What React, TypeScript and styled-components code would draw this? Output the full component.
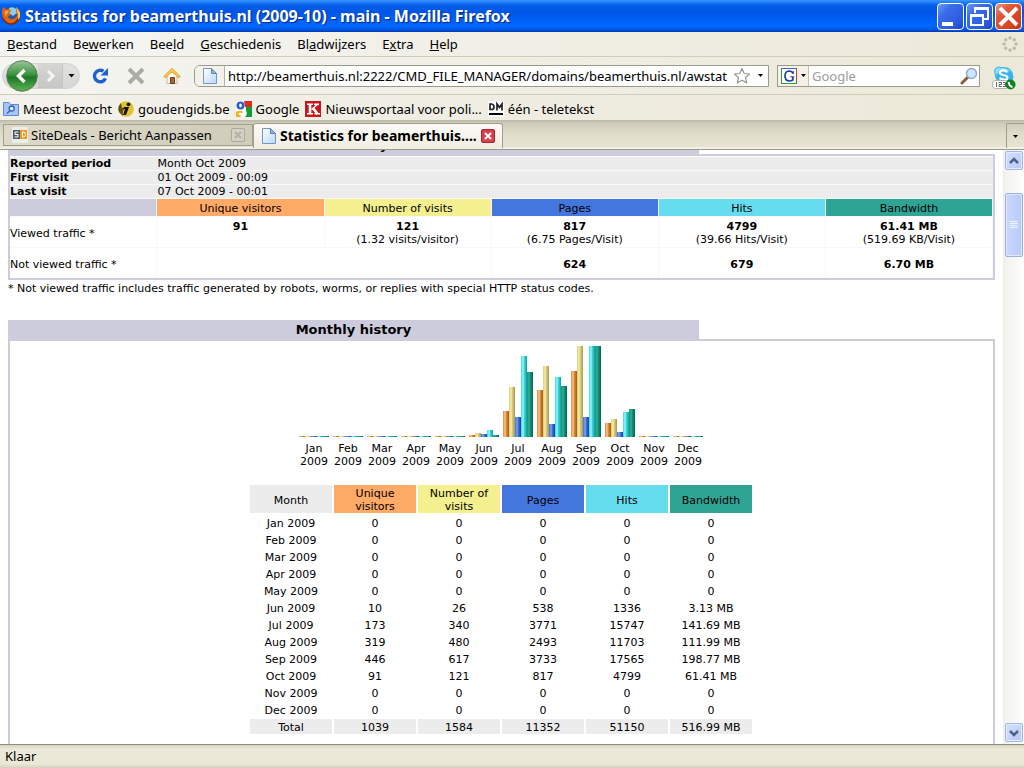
import React from "react";
import styled, { createGlobalStyle, css } from "styled-components";

const ui = `"Noto Sans", "Open Sans", sans-serif`;
const page = `"DejaVu Sans", Verdana, sans-serif`;

const Global = createGlobalStyle`
  *, *::before, *::after { box-sizing: border-box; }
  html, body { margin: 0; padding: 0; }
  body { background: #fff; color: #000; font: 13px/18px ${ui}; }
  button, input { font: inherit; color: inherit; margin: 0; padding: 0; border: 0; background: none; border-radius: 0; }
  a { color: inherit; text-decoration: none; }
  svg { display: block; flex: none; }
`;

const Window = styled.div`
  display: flex;
  flex-direction: column;
  height: 100vh;
  overflow: hidden;
`;

const TitleBar = styled.header`
  display: flex;
  align-items: center;
  gap: 4px;
  flex: none;
  height: 32px;
  padding: 0 2px 0 1px;
  background: linear-gradient(#3a93ff 0, #2483fb 2px, #0560ea 5px, #0055e5 12px, #0060fa 20px, #0068ff 27px, #0051dc 30px, #0039b5 32px);
`;

const WindowTitle = styled.h1`
  flex: 1;
  min-width: 0;
  margin: 0;
  overflow: hidden;
  white-space: nowrap;
  color: #fff;
  font: bold 16px/20px ${ui};
  text-shadow: 1px 1px 1px #04257e;
`;

const WindowButtons = styled.div`
  display: flex;
  gap: 2px;
`;

const WindowButton = styled.button<{ $close?: boolean }>`
  display: grid;
  place-items: center;
  width: 27px;
  height: 27px;
  border: 1px solid #fff;
  border-radius: 4px;
  background: ${(p) =>
    p.$close
      ? "linear-gradient(135deg, #ee9a80 0, #e2593a 30%, #d8401c 75%, #b93413 100%)"
      : "linear-gradient(135deg, #6f9bf5 0, #3a6cec 30%, #2c5ce0 75%, #1a42c4 100%)"};
`;

const MenuBar = styled.nav`
  display: flex;
  align-items: center;
  gap: 16px;
  flex: none;
  height: 25px;
  padding: 0 6px 0 7px;
  background: linear-gradient(90deg, #f5f5f3, #ece9d8);
  border-bottom: 1px solid #d0cdbb;
`;

const MenuItem = styled.button`
  line-height: 18px;
`;

const Spacer = styled.span`
  flex: 1;
`;

const Toolbar = styled.div`
  display: flex;
  align-items: center;
  flex: none;
  height: 38px;
  padding: 0 8px 0 2px;
  background: linear-gradient(90deg, #f4f4f1, #ece9d8);
  border-bottom: 1px solid #cfccba;
`;

const HistoryGroup = styled.div`
  display: flex;
  align-items: center;
  height: 26px;
  width: 78px;
  padding-left: 3px;
  border: 1px solid #d4d4cf;
  border-radius: 13px;
  background: linear-gradient(#e2e2de, #d6d6d2);
`;

const BackButton = styled.button`
  flex: none;
  width: 32px;
  height: 32px;
`;

const ForwardButton = styled.button`
  display: grid;
  place-items: center;
  width: 26px;
  height: 24px;
  border-right: 1px solid #c6c6c2;
  background: linear-gradient(#d6d6d3, #c6c6c3);
`;

const CaretButton = styled.button`
  display: grid;
  place-items: center;
  width: 16px;
  height: 20px;
`;

const ToolButtons = styled.div`
  display: flex;
  gap: 16px;
  margin: 0 12px 0 10px;
`;

const IconButton = styled.button<{ $wide?: boolean }>`
  display: grid;
  place-items: center;
  flex: none;
  height: 20px;
  width: ${(p) => (p.$wide ? "24px" : "20px")};
`;

const AddressBox = styled.div`
  display: flex;
  align-items: center;
  flex: 1;
  min-width: 0;
  height: 22px;
  border: 1px solid #9a9a8d;
  border-radius: 6px 0 0 6px;
  background: #fff;
  overflow: hidden;
`;

const SiteIcon = styled.span`
  display: grid;
  place-items: center;
  flex: none;
  width: 30px;
  height: 20px;
  border-right: 1px solid #b5b3a5;
  background: #f3f1e8;
`;

const TextInput = styled.input`
  flex: 1;
  min-width: 0;
  height: 20px;
  padding: 0 3px;
  line-height: 20px;
  outline: none;
  &::placeholder { color: #9c9c9c; opacity: 1; }
`;

const SearchBox = styled.div`
  display: flex;
  align-items: center;
  flex: none;
  width: 203px;
  height: 22px;
  margin: 0 12px 0 8px;
  border: 1px solid #9a9a8d;
  background: #fff;
`;

const EngineButton = styled.button`
  display: flex;
  align-items: center;
  gap: 4px;
  flex: none;
  width: 31px;
  height: 20px;
  padding-left: 3px;
  border-right: 1px solid #c2c0b2;
  background: #f3f1e8;
`;

const Bookmarks = styled.nav`
  display: flex;
  align-items: center;
  gap: 6px;
  flex: none;
  height: 25px;
  padding: 2px 3px 0;
  background: linear-gradient(90deg, #f2f1eb, #ece9d8);
`;

const Bookmark = styled.a`
  display: flex;
  align-items: center;
  gap: 4px;
  white-space: nowrap;
`;

const TabStrip = styled.div`
  display: flex;
  align-items: flex-end;
  flex: none;
  height: 30px;
  padding-left: 3px;
  background: linear-gradient(#b9b7a6 0, #cfccbb 3px, #e0ddcb 14px, #e6e3d2 26px);
  border-bottom: 1px solid #9c9a8a;
  box-shadow: inset 0 -2px 0 #f3f1e6;
`;

const Tab = styled.div<{ $active?: boolean }>`
  display: flex;
  align-items: center;
  gap: 3px;
  width: 250px;
  height: 22px;
  margin-bottom: 3px;
  padding: 0 7px 0 8px;
  border: 1px solid #a19f90;
  background: linear-gradient(90deg, #dcd9c9, #cfccba);
  ${(p) =>
    p.$active &&
    css`
      gap: 4px;
      height: 25px;
      margin-bottom: 1px;
      border-bottom: 0;
      border-radius: 3px 3px 0 0;
      background: linear-gradient(#fbfaf6, #f0eee2);
      font-size: 14px;
      font-weight: bold;
    `}
`;

const TabLabel = styled.button`
  flex: 1;
  min-width: 0;
  overflow: hidden;
  white-space: nowrap;
  text-align: left;
  line-height: 20px;
`;

const TabClose = styled.button<{ $active?: boolean }>`
  display: grid;
  place-items: center;
  flex: none;
  width: 14px;
  height: 14px;
  border: 1px solid ${(p) => (p.$active ? "#a32330" : "#aba99c")};
  border-radius: 2px;
  background: ${(p) => (p.$active ? "#d6424c" : "#d4d1c2")};
`;

const TabListButton = styled(CaretButton)`
  height: 25px;
  width: 18px;
  margin-bottom: 1px;
  border-left: 1px solid #a19f90;
  border-top: 1px solid #a19f90;
`;

const Body = styled.div`
  display: flex;
  flex: 1;
  min-height: 0;
`;

const Viewport = styled.main`
  flex: 1;
  min-width: 0;
  overflow: hidden;
  padding: 0 8px;
  font: 11px/13px ${page};
`;

const Section = styled.section<{ $scrolled?: boolean }>`
  margin-top: ${(p) => (p.$scrolled ? "-15px" : "25px")};
`;

const SectionTitle = styled.h2`
  width: 70%;
  height: 19px;
  margin: 0;
  background: #ccccdd;
  font: bold 13px/19px ${page};
  text-align: center;
`;

const Panel = styled.div<{ $flush?: boolean }>`
  border: 2px solid #ccccdd;
  padding: ${(p) => (p.$flush ? "1px 0 0" : "5px 1px 40px 0")};
`;

const SummaryTable = styled.table`
  width: 100%;
  border-collapse: separate;
  border-spacing: 0;
  table-layout: fixed;
  col:first-child { width: 15%; }
`;

const InfoRow = styled.tr`
  th, td {
    height: 14px;
    padding: 0;
    border-bottom: 1px solid #f9f9f9;
    background: #ececec;
    line-height: 13px;
    text-align: left;
  }
`;

const HeadCell = styled.th<{ $tone: string }>`
  height: 18px;
  padding: 1px 0 0;
  border-right: 1px solid #f4f4f4;
  border-bottom: 1px solid #f9f9f9;
  background: ${(p) => p.$tone};
  font-weight: normal;
  text-align: center;
`;

const TrafficRow = styled.tr`
  th { font-weight: normal; text-align: left; }
  th, td {
    height: 31px;
    padding: 2px 0 0;
    border-right: 1px solid #f7f7f7;
    border-bottom: 1px solid #f7f7f7;
  }
  td { text-align: center; }
  &:last-child th, &:last-child td { height: 30px; border-bottom: 0; }
`;

const Line = styled.div`
  min-height: 13px;
`;

const Note = styled.p`
  margin: 2px 0 0;
`;

const Chart = styled.div`
  display: flex;
  justify-content: center;
  gap: 4px;
`;

const Group = styled.div`
  width: 30px;
`;

const Bars = styled.div`
  display: flex;
  align-items: flex-end;
  height: 91px;
  margin-bottom: 5px;
`;

const Bar = styled.span<{ $light: string; $mid: string; $dark: string }>`
  width: 6px;
  background: linear-gradient(90deg, ${(p) => p.$mid}, ${(p) => p.$light} 35%, ${(p) => p.$mid} 55%, ${(p) => p.$dark});
`;

const GroupLabel = styled.div`
  text-align: center;
`;

const MonthTable = styled.table`
  margin: 15px auto 0;
  border-collapse: separate;
  border-spacing: 2px;
  text-align: center;
  th, td { width: 82px; height: 15px; padding: 2px 0 0; font-weight: normal; }
`;

const MonthHead = styled.th<{ $tone: string }>`
  && { height: 28px; padding: 2px 8px 0; }
  background: ${(p) => p.$tone};
`;

const TotalRow = styled.tr`
  th, td { background: #ececec; }
`;

const ScrollBar = styled.div`
  display: flex;
  flex-direction: column;
  align-items: center;
  flex: none;
  width: 21px;
  padding: 1px 0 2px;
  border-left: 1px solid #eeede5;
  background: linear-gradient(90deg, #f3f1ec, #fefefb);
`;

const ScrollButton = styled.button`
  display: grid;
  place-items: center;
  flex: none;
  width: 18px;
  height: 19px;
  border: 1px solid #9db5ee;
  border-radius: 2px;
  box-shadow: inset 0 0 0 1px #e6eefd;
  background: linear-gradient(135deg, #d4e0fd, #b5c8f7);
`;

const ScrollThumb = styled.div`
  display: grid;
  place-items: center;
  flex: none;
  width: 18px;
  height: 64px;
  margin-top: 23px;
  border: 1px solid #98b0e8;
  border-radius: 2px;
  box-shadow: inset 0 0 0 1px #dfe8fd;
  background: linear-gradient(90deg, #cad8fd, #b7cafb);
`;

const StatusBar = styled.footer`
  flex: none;
  height: 24px;
  padding: 1px 5px;
  border-top: 1px solid #8f8d7e;
  background: linear-gradient(#d8d5c4 0, #ebe8d7 4px, #ebe8d7 19px, #d3d0be 23px);
  line-height: 20px;
`;

const Caret = () => (
  <svg width="7" height="4" viewBox="0 0 7 4" aria-hidden="true"><path d="M0.5 0h6L3.5 3.5z" fill="#000" /></svg>
);

const SmallCaret = () => (
  <svg width="5" height="3" viewBox="0 0 5 3" aria-hidden="true"><path d="M0 0h5L2.5 3z" fill="#000" /></svg>
);

const FirefoxIcon = () => (
  <svg width="20" height="20" viewBox="0 0 20 20" aria-hidden="true">
    <circle cx="11" cy="8" r="7.500" fill="#2458a8" />
    <path d="M8 2q4-2 7 1l1 4-4 3-4-3z" fill="#8ccdf2" />
    <path d="M2 1l3 2.500q2-1 4 0L10 5 8 7l2 2-3 1q1 4 5 3 4-1 4-5l-1-4 2-1q3 5 1.500 9-2 6-8.500 6-7-.5-8.500-7Q0 6 2 1z" fill="#e0650f" />
    <path d="M1 7q0 6 5 8 5 2 10-2l3-4q0 9-8.500 10Q0 18 1 7z" fill="#8a2a0c" />
    <path d="M15 1q5 4 4 10l-2 3q1-5-1-9z" fill="#ffc93c" />
    <path d="M4 5l4-.5L6 8l-2 2z" fill="#f8ab35" />
    <path d="M3 10q1 4 5 5 5 1 8-3-1 5-7 5-5-1-6-7z" fill="#e9751a" />
  </svg>
);

const PageIcon = () => (
  <svg width="14" height="16" viewBox="0 0 14 16" aria-hidden="true">
    <defs><linearGradient id="sheet" x2="1" y2="1"><stop stopColor="#fff" /><stop offset="1" stopColor="#b9d7fb" /></linearGradient></defs>
    <path d="M.5.5h8l5 5v10H.5z" fill="url(#sheet)" stroke="#7296c8" />
    <path d="M8.500.5v5h5z" fill="#8fb8ee" stroke="#5c84bd" />
  </svg>
);

const colors = {
  visitors: "#ffaa66",
  visits: "#f4f090",
  pages: "#4477dd",
  hits: "#66ddee",
  bandwidth: "#2ea495",
};
const tones = Object.values(colors);

const barTones = [
  { light: "#f8c890", mid: "#dd8c38", dark: "#a65a10" },
  { light: "#f6eeae", mid: "#d8cb7a", dark: "#aa9c4c" },
  { light: "#7ea6f4", mid: "#4470d8", dark: "#173f9e" },
  { light: "#94fbfb", mid: "#3ed7dc", dark: "#189aa6" },
  { light: "#2fb397", mid: "#149276", dark: "#06634e" },
];

const months = [
  { name: "Jan", data: ["0", "0", "0", "0", "0"], bars: [1, 1, 1, 1, 1] },
  { name: "Feb", data: ["0", "0", "0", "0", "0"], bars: [1, 1, 1, 1, 1] },
  { name: "Mar", data: ["0", "0", "0", "0", "0"], bars: [1, 1, 1, 1, 1] },
  { name: "Apr", data: ["0", "0", "0", "0", "0"], bars: [1, 1, 1, 1, 1] },
  { name: "May", data: ["0", "0", "0", "0", "0"], bars: [1, 1, 1, 1, 1] },
  { name: "Jun", data: ["10", "26", "538", "1336", "3.13 MB"], bars: [2, 4, 3, 7, 2] },
  { name: "Jul", data: ["173", "340", "3771", "15747", "141.69 MB"], bars: [26, 50, 20, 81, 65] },
  { name: "Aug", data: ["319", "480", "2493", "11703", "111.99 MB"], bars: [47, 71, 13, 60, 51] },
  { name: "Sep", data: ["446", "617", "3733", "17565", "198.77 MB"], bars: [66, 91, 20, 91, 91] },
  { name: "Oct", data: ["91", "121", "817", "4799", "61.41 MB"], bars: [14, 18, 5, 25, 28] },
  { name: "Nov", data: ["0", "0", "0", "0", "0"], bars: [1, 1, 1, 1, 1] },
  { name: "Dec", data: ["0", "0", "0", "0", "0"], bars: [1, 1, 1, 1, 1] },
];

const menus: [string, string, string][] = [
  ["", "B", "estand"],
  ["Be", "w", "erken"],
  ["Bee", "l", "d"],
  ["", "G", "eschiedenis"],
  ["Bl", "a", "dwijzers"],
  ["E", "x", "tra"],
  ["", "H", "elp"],
];

const info = [
  ["Reported period", "Month Oct 2009"],
  ["First visit", "01 Oct 2009 - 00:09"],
  ["Last visit", "07 Oct 2009 - 00:01"],
];

const viewed = [
  ["91", ""],
  ["121", "(1.32 visits/visitor)"],
  ["817", "(6.75 Pages/Visit)"],
  ["4799", "(39.66 Hits/Visit)"],
  ["61.41 MB", "(519.69 KB/Visit)"],
];

const CloseCross = ({ color }: { color: string }) => (
  <svg width="8" height="8" viewBox="0 0 8 8" aria-hidden="true"><path d="M1 1l6 6M7 1L1 7" stroke={color} strokeWidth="2" /></svg>
);

export default function App() {
  return (
    <>
      <Global />
      <Window>
        <TitleBar>
          <FirefoxIcon />
          <WindowTitle>Statistics for beamerthuis.nl (2009-10) - main - Mozilla Firefox</WindowTitle>
          <WindowButtons>
            <WindowButton aria-label="Minimize">
              <svg width="25" height="25" viewBox="0 0 25 25"><path d="M4 18h11v4H4z" fill="#fff" /></svg>
            </WindowButton>
            <WindowButton aria-label="Restore">
              <svg width="25" height="25" viewBox="0 0 25 25" fill="none" stroke="#fff">
                <path d="M8 9V4h13v11h-4" strokeWidth="2" /><path d="M7 4.500h15" strokeWidth="3" />
                <path d="M4 11h12v10H4z" strokeWidth="2" /><path d="M3 11.500h14" strokeWidth="3" />
              </svg>
            </WindowButton>
            <WindowButton aria-label="Close" $close>
              <svg width="25" height="25" viewBox="0 0 25 25"><path d="M4 4l17 17M21 4L4 21" stroke="#fff" strokeWidth="4" /></svg>
            </WindowButton>
          </WindowButtons>
        </TitleBar>

        <MenuBar>
          {menus.map(([a, key, b]) => (
            <MenuItem key={a + key + b}>{a}<u>{key}</u>{b}</MenuItem>
          ))}
          <Spacer />
          <svg width="16" height="16" viewBox="0 0 16 16" fill="#bdbbb0" aria-hidden="true">
            <circle cx="8" cy="2" r="1.700" /><circle cx="12.300" cy="3.700" r="1.700" /><circle cx="14" cy="8" r="1.700" /><circle cx="12.300" cy="12.300" r="1.700" />
            <circle cx="8" cy="14" r="1.700" /><circle cx="3.700" cy="12.300" r="1.700" /><circle cx="2" cy="8" r="1.700" /><circle cx="3.700" cy="3.700" r="1.700" />
          </svg>
        </MenuBar>

        <Toolbar>
          <HistoryGroup>
            <BackButton aria-label="Back">
              <svg width="32" height="32" viewBox="0 0 32 32">
                <defs><linearGradient id="back" x2="0" y2="1"><stop stopColor="#9cc79a" /><stop offset=".45" stopColor="#3c9440" /><stop offset=".55" stopColor="#1f7a26" /><stop offset="1" stopColor="#5cb457" /></linearGradient></defs>
                <circle cx="16" cy="16" r="15.300" fill="url(#back)" stroke="#5a7a58" />
                <path d="M18.500 10l-6 6 6 6" fill="none" stroke="#fff" strokeWidth="3.400" />
              </svg>
            </BackButton>
            <ForwardButton aria-label="Forward">
              <svg width="12" height="12" viewBox="0 0 12 12"><path d="M4 1l5 5-5 5" fill="none" stroke="#f6f6f6" strokeWidth="3" /></svg>
            </ForwardButton>
            <CaretButton aria-label="Recent pages"><Caret /></CaretButton>
          </HistoryGroup>
          <ToolButtons>
            <IconButton aria-label="Reload">
              <svg width="18" height="18" viewBox="0 0 18 18">
                <path d="M12.500 4.200A5.800 5.800 0 1 0 14.500 11.500" fill="none" stroke="#1e62d0" strokeWidth="3.400" /><path d="M17 1v7.500H9.500z" fill="#1e62d0" />
              </svg>
            </IconButton>
            <IconButton aria-label="Stop">
              <svg width="18" height="18" viewBox="0 0 18 18"><path d="M2 2l14 14M16 2L2 16" stroke="#adada8" strokeWidth="4" /></svg>
            </IconButton>
            <IconButton aria-label="Home">
              <svg width="18" height="18" viewBox="0 0 18 18">
                <path d="M4 9v7.500h10V9L9 4z" fill="#fffdf2" stroke="#c9b890" /><path d="M7.500 10.500h4v6h-4z" fill="#a8663e" stroke="#6c3f20" />
                <path d="M9 1.500L.8 9.500l1.400 1.200L9 4.700l6.800 6 1.400-1.200z" fill="#ffcf58" stroke="#dc9a20" strokeLinejoin="round" />
              </svg>
            </IconButton>
          </ToolButtons>
          <AddressBox>
            <SiteIcon><PageIcon /></SiteIcon>
            <TextInput aria-label="Address" defaultValue="http://beamerthuis.nl:2222/CMD_FILE_MANAGER/domains/beamerthuis.nl/awstat" />
            <IconButton aria-label="Bookmark this page">
              <svg width="18" height="18" viewBox="0 0 18 18"><path d="M9 1.500l2.200 5 5.300.5-4 3.600 1.200 5.400L9 13.200 4.300 16l1.200-5.400L1.500 7l5.300-.5z" fill="#fff" stroke="#96968f" strokeWidth="1.200" strokeLinejoin="round" /></svg>
            </IconButton>
            <CaretButton aria-label="Show history"><SmallCaret /></CaretButton>
          </AddressBox>
          <SearchBox>
            <EngineButton aria-label="Search engine">
              <svg width="16" height="16" viewBox="0 0 16 16">
                <path d="M.5.5h15v15H.5z" fill="#fff" />
                <path d="M.5.5h15" stroke="#3a66c8" /><path d="M.5 0v16" stroke="#2f9a3a" /><path d="M15.500 0v16" stroke="#d93a2f" /><path d="M0 15.500h16" stroke="#2f9a3a" />
                <path d="M12 5.500Q11 3 8.200 3 4 3.200 4 8t4.200 5q2 0 3.600-1V9" fill="none" stroke="#1c3f9c" strokeWidth="1.700" /><path d="M9.300 8.800h4M12.300 3v3" stroke="#1c3f9c" />
              </svg>
              <SmallCaret />
            </EngineButton>
            <TextInput aria-label="Search" placeholder="Google" />
            <IconButton aria-label="Go">
              <svg width="18" height="18" viewBox="0 0 18 18">
                <path d="M2 16l6-6" stroke="#8a5a3a" strokeWidth="3" strokeLinecap="round" />
                <circle cx="11.500" cy="6.500" r="5" fill="#cfe6fb" stroke="#8cabd6" strokeWidth="1.500" />
              </svg>
            </IconButton>
          </SearchBox>
          <IconButton aria-label="Skype" $wide>
            <svg width="24" height="24" viewBox="0 0 24 24">
              <path d="M2 5a5 5 0 0 1 7-4q11-1 12 8a5 5 0 0 1-5 7Q4 18 3 10z" fill="#38b6ea" />
              <path d="M3 5a4 4 0 0 1 6-3q7-.5 10 4Q10 2 4 9z" fill="#8bdcf8" />
              <path d="M15.500 6q-5-3-7.500 0-1 2 3 3 6 1 4 4-3 2-7.500-1" fill="none" stroke="#fff" strokeWidth="2.200" />
              <rect x=".5" y="14.500" width="16" height="8" rx="3" fill="#fff" stroke="#b0b0b0" />
              <path d="M4.500 16v5M6.500 16.500h3v2h-2.500v2h3M11 16.500h2.500v4H11M11.500 18.500h2" fill="none" stroke="#666" />
              <circle cx="18.500" cy="18.500" r="5" fill="#0d8424" /><path d="M16.800 16q0 4 3.700 5" fill="none" stroke="#fff" strokeWidth="2" />
            </svg>
          </IconButton>
        </Toolbar>

        <Bookmarks>
          <Bookmark href="#">
            <svg width="16" height="16" viewBox="0 0 16 16"><path d="M.5 1.500h5.500l1.500 2h8v11H.5z" fill="#a8c6f4" stroke="#5b8ad6" /><circle cx="8.700" cy="7.500" r="2.500" fill="#e2eefd" stroke="#2e62bb" strokeWidth="1.300" /><path d="M7 9.500l-3 3" stroke="#2e62bb" strokeWidth="1.500" /></svg>
            Meest bezocht
          </Bookmark>
          <Bookmark href="#">
            <svg width="16" height="16" viewBox="0 0 16 16"><circle cx="8" cy="8" r="7.800" fill="#e2c32c" /><path d="M3 2Q-1 6 1 11l4 4q-1-6 2-8L4 7z" fill="#5c511c" /><path d="M6 6h5l-3 8H5l2-6H5z" fill="#17130a" /><circle cx="10.500" cy="3.300" r="1.900" fill="#17130a" /></svg>
            goudengids.be
          </Bookmark>
          <Bookmark href="#">
            <svg width="16" height="16" viewBox="0 0 16 16">
              <path d="M0 0h16v16H0z" fill="#fff" />
              <path d="M8 0h8v6H9z" fill="#dd2b22" /><path d="M10 6h6v10H9q3-3 1-6z" fill="#139c3c" />
              <path d="M0 11q3-2 6-1l1 2-3 4H0z" fill="#f2b320" /><circle cx="4.500" cy="4.500" r="4" fill="#2a5fc9" /><ellipse cx="4.500" cy="4.500" rx="1.300" ry="2" fill="#fff" />
              <ellipse cx="5" cy="13" rx="2.500" ry="1.300" fill="#fff" />
            </svg>
            Google
          </Bookmark>
          <Bookmark href="#">
            <svg width="16" height="16" viewBox="0 0 16 16"><path d="M0 0h16v16H0z" fill="#c8161d" /><path d="M2 3.300h6M2 12.700h6M9 3.300h5M9.500 12.700H15" stroke="#fff" strokeWidth="1.500" /><path d="M5 3v10" stroke="#fff" strokeWidth="2.600" /><path d="M12.500 3.500L6.500 8.500" stroke="#fff" strokeWidth="1.500" /><path d="M8 7l4.500 6" stroke="#fff" strokeWidth="2.600" /></svg>
            Nieuwsportaal voor poli...
          </Bookmark>
          <Bookmark href="#">
            <svg width="16" height="16" viewBox="0 0 16 16"><path d="M0 0h16v16H0z" fill="#fff" /><path d="M1 12h14v2H1z" /><path d="M2 3v5.500h1.500Q6 8.500 6 6T3.500 3zM9 9.500V3l2.500 3.500L14 3v6.500" fill="none" stroke="#222" strokeWidth="1.700" /></svg>
            één - teletekst
          </Bookmark>
        </Bookmarks>

        <TabStrip>
          <Tab>
            <svg width="16" height="16" viewBox="0 0 16 16"><path d="M0 0h16v16H0z" fill="#eceeec" /><path d="M1 3h7v9H1z" fill="#4d5866" /><path d="M8 3h7v9H8z" fill="#f59a16" /><path d="M6.500 5H3v2.500h3V10H2.500M10.500 5v5h1.500q1.500-1 1.500-2.500T12 5z" fill="none" stroke="#fff" /></svg>
            <TabLabel>SiteDeals - Bericht Aanpassen</TabLabel>
            <TabClose aria-label="Close tab"><CloseCross color="#b3b1a6" /></TabClose>
          </Tab>
          <Tab $active>
            <PageIcon />
            <TabLabel>Statistics for beamerthuis....</TabLabel>
            <TabClose aria-label="Close tab" $active><CloseCross color="#fff" /></TabClose>
          </Tab>
          <Spacer />
          <TabListButton aria-label="List all tabs"><SmallCaret /></TabListButton>
        </TabStrip>

        <Body>
          <Viewport>
            <Section $scrolled>
              <SectionTitle>Summary</SectionTitle>
              <Panel $flush>
                <SummaryTable>
                  <colgroup><col /><col /><col /><col /><col /><col /></colgroup>
                  <tbody>
                    {info.map(([label, value]) => (
                      <InfoRow key={label}><th scope="row">{label}</th><td colSpan={5}>{value}</td></InfoRow>
                    ))}
                    <tr>
                      <HeadCell as="td" $tone="#ccccdd" />
                      {["Unique visitors", "Number of visits", "Pages", "Hits", "Bandwidth"].map((h, i) => (
                        <HeadCell key={h} scope="col" $tone={tones[i]}>{h}</HeadCell>
                      ))}
                    </tr>
                    <TrafficRow>
                      <th scope="row">Viewed traffic *</th>
                      {viewed.map(([n, per]) => (
                        <td key={n}><Line><b>{n}</b></Line><Line>{per}</Line></td>
                      ))}
                    </TrafficRow>
                    <TrafficRow>
                      <th scope="row">Not viewed traffic *</th>
                      <td colSpan={2} />
                      <td><b>624</b></td><td><b>679</b></td><td><b>6.70 MB</b></td>
                    </TrafficRow>
                  </tbody>
                </SummaryTable>
              </Panel>
              <Note>* Not viewed traffic includes traffic generated by robots, worms, or replies with special HTTP status codes.</Note>
            </Section>

            <Section>
              <SectionTitle>Monthly history</SectionTitle>
              <Panel>
                <Chart>
                  {months.map((m) => (
                    <Group key={m.name}>
                      <Bars>
                        {m.bars.map((h, i) => (
                          <Bar key={i} $light={barTones[i].light} $mid={barTones[i].mid} $dark={barTones[i].dark} style={{ height: h }} />
                        ))}
                      </Bars>
                      <GroupLabel>{m.name}<br />2009</GroupLabel>
                    </Group>
                  ))}
                </Chart>
                <MonthTable>
                  <thead>
                    <tr>
                      <MonthHead scope="col" $tone="#ececec">Month</MonthHead>
                      {["Unique visitors", "Number of visits", "Pages", "Hits", "Bandwidth"].map((h, i) => (
                        <MonthHead key={h} scope="col" $tone={tones[i]}>{h}</MonthHead>
                      ))}
                    </tr>
                  </thead>
                  <tbody>
                    {months.map((m) => (
                      <tr key={m.name}><th scope="row">{m.name} 2009</th>{m.data.map((d, i) => <td key={i}>{d}</td>)}</tr>
                    ))}
                    <TotalRow>
                      <th scope="row">Total</th><td>1039</td><td>1584</td><td>11352</td><td>51150</td><td>516.99 MB</td>
                    </TotalRow>
                  </tbody>
                </MonthTable>
              </Panel>
            </Section>
          </Viewport>
          <ScrollBar>
            <ScrollButton aria-label="Scroll up">
              <svg width="10" height="8" viewBox="0 0 10 8"><path d="M1 6l4-4 4 4" fill="none" stroke="#4d6185" strokeWidth="2.500" /></svg>
            </ScrollButton>
            <ScrollThumb>
              <svg width="8" height="8" viewBox="0 0 8 8"><path d="M0 .5h8M0 2.500h8M0 4.500h8M0 6.500h8" stroke="#eef4fe" /></svg>
            </ScrollThumb>
            <Spacer />
            <ScrollButton aria-label="Scroll down">
              <svg width="10" height="8" viewBox="0 0 10 8"><path d="M1 2l4 4 4-4" fill="none" stroke="#4d6185" strokeWidth="2.500" /></svg>
            </ScrollButton>
          </ScrollBar>
        </Body>

        <StatusBar>Klaar</StatusBar>
      </Window>
    </>
  );
}
